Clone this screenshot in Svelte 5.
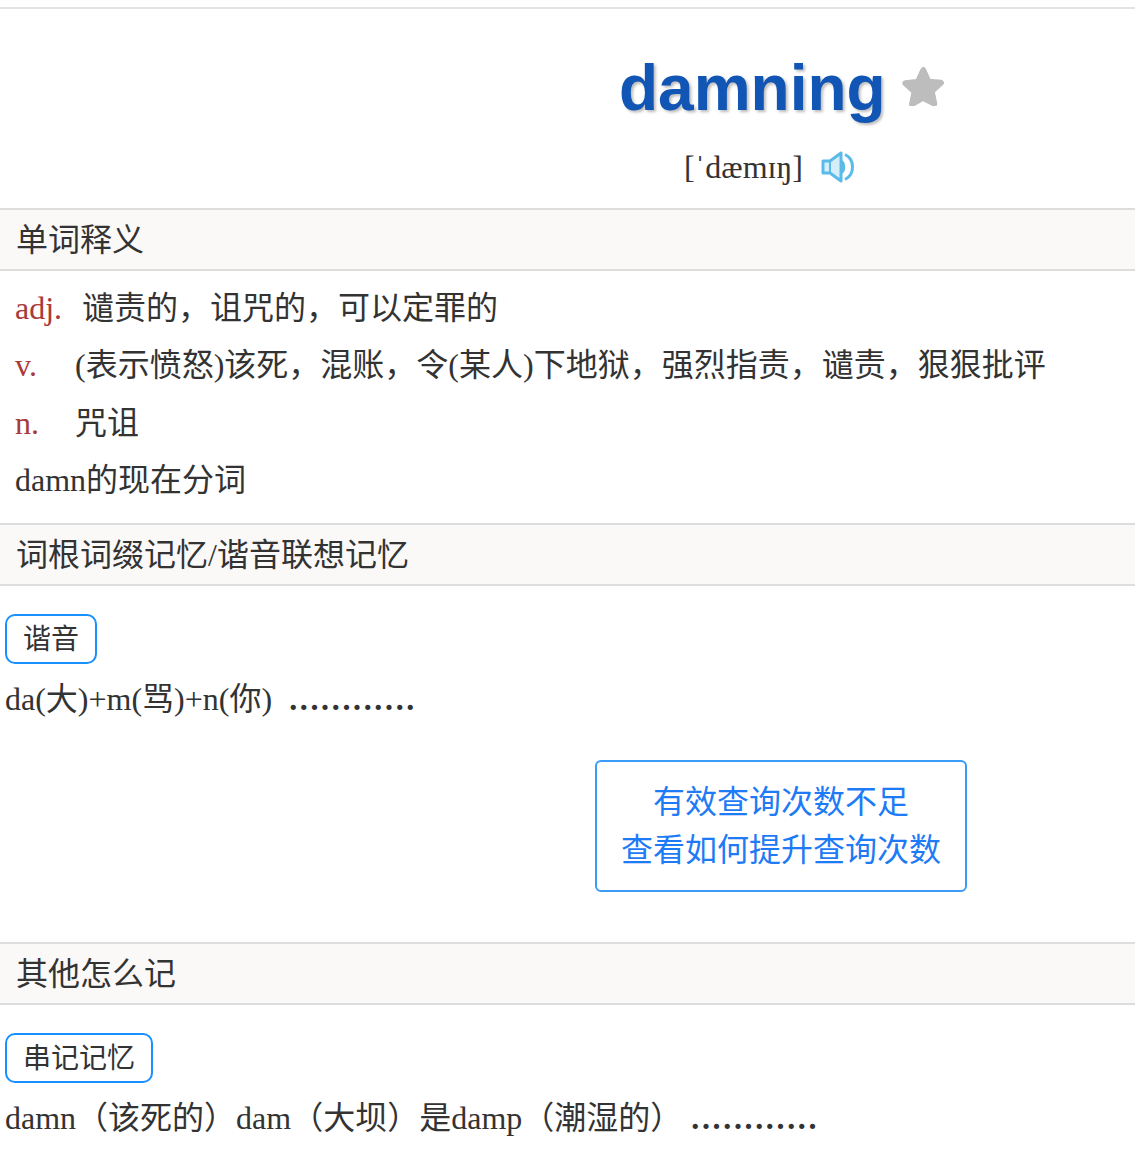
<script>
  const meanings = [
    { pos: 'adj.', text: '谴责的，诅咒的，可以定罪的', wide: false },
    { pos: 'v.', text: '(表示愤怒)该死，混账，令(某人)下地狱，强烈指责，谴责，狠狠批评', wide: true },
    { pos: 'n.', text: '咒诅', wide: true },
  ];
</script>

<main>
  <header class="word">
    <div class="title">
      <h1>damning</h1>
      <svg class="star" viewBox="0 0 42 40" width="42" height="40" aria-hidden="true">
        <path d="M21 1.500c1 0 1.700.6 2.200 1.600l4.600 10.300 11.200 1.200c2.300.3 3 2.400 1.400 3.900l-8.300 7.500 2.300 11c.5 2.300-1.300 3.600-3.300 2.500L21 34.400l-9.800 5.500c-2 1.100-3.800-.2-3.300-2.500l2.300-11-8.300-7.500c-1.600-1.500-.9-3.600 1.400-3.900l11.200-1.200 4.600-10.300c.5-1 1.200-1.600 2.400-1.500z" fill="#bdbdbd" stroke="#bdbdbd" stroke-width="1.500" stroke-linejoin="round" />
      </svg>
    </div>
    <div class="phonetic">
      <span>[ˈdæmɪŋ]</span>
      <svg class="speaker" viewBox="0 0 34 32" width="34" height="32" aria-hidden="true" fill="none" stroke="#5bbbe8" stroke-width="3">
        <path d="M2 10h7L20 2v28L9 22H2z" fill="#d6eefa" stroke-linejoin="round" />
        <path d="M9 10v12" stroke-width="2" />
        <path d="M20 10.500c3.500 1 3.500 10 0 11" />
        <path d="M24 3.500c10 5 10 20 0 25" />
      </svg>
    </div>
  </header>

  <h2>单词释义</h2>
  <div class="meanings">
    {#each meanings as m}
      <p class="row">
        <span class="pos" class:wide={m.wide}>{m.pos}</span><span>{m.text}</span>
      </p>
    {/each}
    <p class="row">damn的现在分词</p>
  </div>

  <h2>词根词缀记忆/谐音联想记忆</h2>
  <div class="memo">
    <span class="tag">谐音</span>
    <p class="short">da(大)+m(骂)+n(你) <b>............</b></p>
    <div class="cta-wrap">
      <a class="cta" href="#quota">有效查询次数不足<br />查看如何提升查询次数</a>
    </div>
  </div>

  <h2>其他怎么记</h2>
  <div class="memo">
    <span class="tag">串记记忆</span>
    <p>damn（该死的）dam（大坝）是damp（潮湿的） <b>............</b></p>
  </div>
</main>

<style>
  :global(body) {
    background: #fff;
  }

  main {
    font-family: "Liberation Serif", "Noto Sans CJK SC", serif;
    font-size: 32px;
    color: #333;
    border-top: 2px solid #e3e3e3;
    margin-top: 7px;
    overflow: hidden;
  }

  .word {
    height: 199px;
    padding-left: 619px;
    box-sizing: border-box;
  }

  .title {
    display: flex;
    align-items: center;
    gap: 16px;
    padding-top: 42px;
  }

  h1 {
    margin: 0;
    font-family: "Liberation Sans", sans-serif;
    font-size: 64px;
    line-height: 74px;
    font-weight: bold;
    color: #1155b5;
    text-shadow: 2px 2px 3px #bbb;
  }

  .star {
    margin-top: -5px;
  }

  .phonetic {
    display: flex;
    align-items: center;
    gap: 18px;
    margin: 23px 0 0 65px;
    line-height: 38px;
  }

  h2 {
    margin: 0;
    padding-left: 16px;
    height: 59px;
    line-height: 60px;
    font-size: 32px;
    font-weight: normal;
    background: #faf9f8;
    border-top: 2px solid #ddd;
    border-bottom: 2px solid #ddd;
  }

  .meanings {
    padding: 8.500px 0 13.100px 15px;
  }

  .row {
    margin: 0;
    height: 57.600px;
    line-height: 57.600px;
    display: flex;
  }

  .pos {
    color: #a83a3a;
    font-size: 32px;
    width: 67px;
  }

  .pos.wide {
    width: 60px;
  }

  .memo {
    padding: 28px 0 0 5px;
  }

  .tag {
    display: inline-block;
    border: 2px solid #1890ff;
    border-radius: 10px;
    padding: 0 16px;
    height: 46px;
    line-height: 48px;
    font-size: 28px;
  }

  .memo p {
    margin: 6px 0 0;
    line-height: 58px;
  }

  b {
    margin-left: 1px;
    letter-spacing: 2.650px;
  }

  .short b {
    margin-left: 9px;
  }

  .cta-wrap {
    display: flex;
    padding: 32px 0 50px 590px;
  }

  .cta {
    width: 368px;
    padding: 16px 0;
    line-height: 48px;
    text-align: center;
    color: #1e7bf5;
    text-decoration: none;
    border: 2px solid #3b9cf8;
    border-radius: 6px;
  }
</style>
